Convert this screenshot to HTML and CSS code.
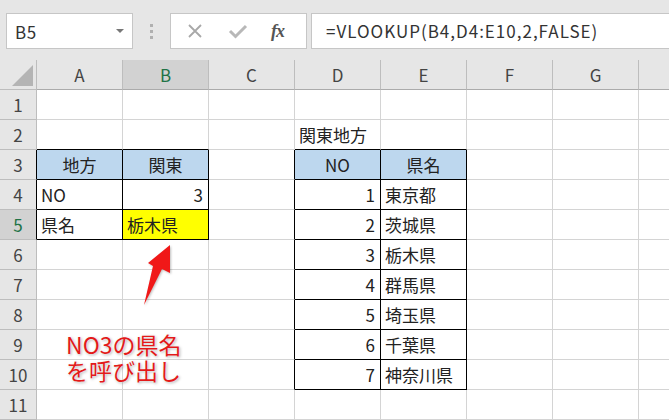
FILE: index.html
```html
<!DOCTYPE html>
<html lang="ja">
<head>
<meta charset="utf-8">
<link rel="stylesheet" href="styles.css">
</head>
<body>
<div class="app">
  <div class="toolbar">
    <div class="namebox"><span class="nb-text">B5</span><span class="nb-arrow"></span></div>
    <div class="sep"><i></i><i></i><i></i></div>
    <div class="fbtns">
      <svg class="ic" width="20" height="20" viewBox="0 0 20 20"><path d="M4 4 L16 16 M16 4 L4 16" stroke="#a8a8a8" stroke-width="1.8" fill="none"/></svg>
      <svg class="ic" width="22" height="20" viewBox="0 0 22 20"><path d="M3 10 L8.5 15.5 L19 5" stroke="#b8b8b8" stroke-width="3" fill="none"/></svg>
      <span class="fx">fx</span>
    </div>
    <div class="formula">=VLOOKUP(B4,D4:E10,2,FALSE)</div>
  </div>

  <div class="sheet">
    <div class="row hdr">
      <div class="rh corner"><span class="tri"></span></div>
      <div class="ch">A</div><div class="ch sel">B</div><div class="ch">C</div><div class="ch">D</div><div class="ch">E</div><div class="ch">F</div><div class="ch">G</div><div class="ch last"></div>
    </div>
    <div class="row">
      <div class="rh">1</div>
      <div class="c"></div><div class="c"></div><div class="c"></div><div class="c"></div><div class="c"></div><div class="c"></div><div class="c"></div><div class="c last"></div>
    </div>
    <div class="row">
      <div class="rh">2</div>
      <div class="c kb"></div><div class="c kb"></div><div class="c"></div><div class="c kb">関東地方</div><div class="c kb"></div><div class="c"></div><div class="c"></div><div class="c last"></div>
    </div>
    <div class="row">
      <div class="rh kr">3</div>
      <div class="c k blue ctr">地方</div><div class="c k blue ctr">関東</div><div class="c kr"></div><div class="c k blue ctr">NO</div><div class="c k blue ctr">県名</div><div class="c"></div><div class="c"></div><div class="c last"></div>
    </div>
    <div class="row">
      <div class="rh kr">4</div>
      <div class="c k">NO</div><div class="c k num">3</div><div class="c kr"></div><div class="c k num">1</div><div class="c k">東京都</div><div class="c"></div><div class="c"></div><div class="c last"></div>
    </div>
    <div class="row">
      <div class="rh kr selr">5</div>
      <div class="c k">県名</div><div class="c k yellow">栃木県</div><div class="c kr"></div><div class="c k num">2</div><div class="c k">茨城県</div><div class="c"></div><div class="c"></div><div class="c last"></div>
    </div>
    <div class="row">
      <div class="rh">6</div>
      <div class="c"></div><div class="c"></div><div class="c kr"></div><div class="c k num">3</div><div class="c k">栃木県</div><div class="c"></div><div class="c"></div><div class="c last"></div>
    </div>
    <div class="row">
      <div class="rh">7</div>
      <div class="c"></div><div class="c"></div><div class="c kr"></div><div class="c k num">4</div><div class="c k">群馬県</div><div class="c"></div><div class="c"></div><div class="c last"></div>
    </div>
    <div class="row">
      <div class="rh">8</div>
      <div class="c"></div><div class="c"></div><div class="c kr"></div><div class="c k num">5</div><div class="c k">埼玉県</div><div class="c"></div><div class="c"></div><div class="c last"></div>
    </div>
    <div class="row">
      <div class="rh">9</div>
      <div class="c"></div><div class="c"></div><div class="c kr"></div><div class="c k num">6</div><div class="c k">千葉県</div><div class="c"></div><div class="c"></div><div class="c last"></div>
    </div>
    <div class="row">
      <div class="rh">10</div>
      <div class="c"></div><div class="c"></div><div class="c kr"></div><div class="c k num">7</div><div class="c k">神奈川県</div><div class="c"></div><div class="c"></div><div class="c last"></div>
    </div>
    <div class="row">
      <div class="rh">11</div>
      <div class="c"></div><div class="c"></div><div class="c"></div><div class="c"></div><div class="c"></div><div class="c"></div><div class="c"></div><div class="c last"></div>
    </div>

    <svg class="arrow" width="40" height="70" viewBox="0 0 40 70">
      <polygon points="30,5 30,33 22,29 4,65 13,26 8,23" fill="#f01818" />
    </svg>
    <div class="note">NO3の県名<br>を呼び出し</div>
  </div>
</div>
</body>
</html>
```

FILE: styles.css
```css
* { box-sizing: border-box; }
html, body { margin: 0; padding: 0; background: #fff; }
body {
  font-family: "Noto Sans CJK JP", "Noto Sans", sans-serif;
  color: #222;
  width: 669px;
  height: 420px;
  overflow: hidden;
}
.app { width: 669px; height: 420px; overflow: hidden; }

.toolbar {
  height: 60px;
  background: #e6e6e6;
  display: flex;
  align-items: flex-start;
  padding-top: 13px;
}
.namebox {
  margin-left: 6px;
  width: 127px;
  height: 36px;
  background: #fff;
  border: 1px solid #c6c6c6;
  display: flex;
  align-items: center;
  justify-content: space-between;
  padding: 0 8px 0 8px;
}
.nb-text { font-size: 17px; color: #333; line-height: 1; letter-spacing: 0.5px; }
.nb-arrow {
  width: 0; height: 0;
  border-left: 4px solid transparent;
  border-right: 4px solid transparent;
  border-top: 4px solid #777;
}
.sep {
  width: 37px;
  height: 36px;
  display: flex;
  flex-direction: column;
  align-items: center;
  justify-content: center;
  gap: 3px;
}
.sep i {
  display: block;
  width: 3px;
  height: 3px;
  background: #b0b0b0;
}
.fbtns {
  width: 137px;
  height: 36px;
  background: #fff;
  border: 1px solid #c6c6c6;
  display: flex;
  align-items: center;
  justify-content: space-between;
  padding: 0 22px 0 14px;
}
.fx {
  font-family: "Liberation Serif", "DejaVu Serif", serif;
  font-style: italic;
  font-weight: bold;
  font-size: 18px;
  color: #555;
  letter-spacing: -1px;
}
.formula {
  margin-left: 4px;
  flex: 1;
  height: 36px;
  background: #fff;
  border: 1px solid #c6c6c6;
  border-right: none;
  font-size: 17px;
  color: #333;
  line-height: 34px;
  padding-left: 14px;
  letter-spacing: 1px;
  white-space: nowrap;
}

.sheet { position: relative; }
.row { display: flex; height: 30px; }
.rh {
  width: 37px;
  flex: none;
  height: 30px;
  background: #e6e6e6;
  border-right: 1px solid #bdbdbd;
  border-bottom: 1px solid #bdbdbd;
  color: #444;
  font-size: 17px;
  text-align: center;
  line-height: 29px;
}
.rh.selr { background: #d2d2d2; color: #217346; }
.corner { position: relative; }
.tri {
  position: absolute;
  right: 3px;
  bottom: 3px;
  width: 0; height: 0;
  border-left: 21px solid transparent;
  border-bottom: 21px solid #b4b4b4;
}
.ch {
  width: 86px;
  flex: none;
  height: 30px;
  background: #e6e6e6;
  border-right: 1px solid #bdbdbd;
  border-bottom: 1px solid #ababab;
  color: #444;
  font-size: 17px;
  text-align: center;
  line-height: 29px;
}
.ch.sel { background: #d2d2d2; color: #217346; }
.c {
  width: 86px;
  flex: none;
  height: 30px;
  border-right: 1px solid #d4d4d4;
  border-bottom: 1px solid #d4d4d4;
  font-size: 17px;
  line-height: 29px;
  padding: 0 4px;
  white-space: nowrap;
  color: #222;
}
.last { width: 60px; border-right: none; }
.k { border-right-color: #000; border-bottom-color: #000; }
.kr { border-right-color: #000; }
.kb { border-bottom-color: #000; }
.ctr { text-align: center; }
.num { text-align: right; padding-right: 5px; }
.blue { background: #bdd7ee; }
.yellow { background: #ffff00; }

.arrow {
  position: absolute;
  left: 140px;
  top: 180px;
  filter: drop-shadow(1px 1px 1px rgba(0,0,0,0.25));
}
.note {
  position: absolute;
  left: 66px;
  top: 271px;
  font-size: 23px;
  line-height: 26px;
  color: #e31a1a;
  text-shadow: 0 0 2px #fff, 1px 1px 3px rgba(0,0,0,0.35);
  white-space: nowrap;
}
```
